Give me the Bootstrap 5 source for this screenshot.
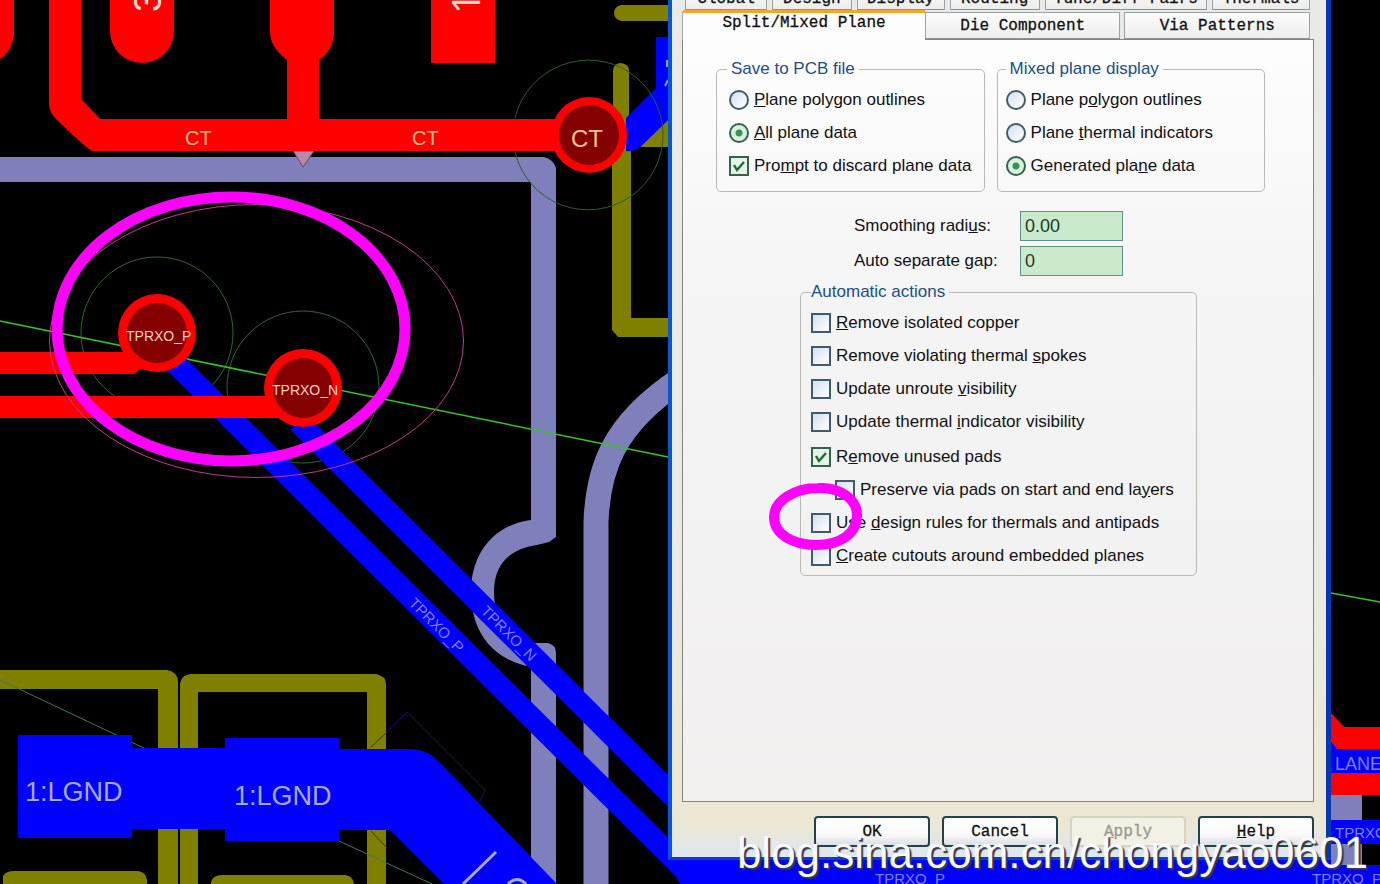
<!DOCTYPE html>
<html lang="en">
<head>
<meta charset="utf-8">
<meta name="viewport" content="width=device-width, initial-scale=1">
<title>Split/Mixed Plane options</title>
<link href="https://cdn.jsdelivr.net/npm/bootstrap@5.3.0/dist/css/bootstrap.min.css" rel="stylesheet">
<style>
body{background:#000;color:#111;font-family:"Liberation Sans",Arial,sans-serif;font-size:17px;line-height:20px}
.stage{min-height:100vh}
.board{position:absolute;inset:0;width:100%;height:100%}
.board text{font-family:"Liberation Sans",sans-serif}
.options{width:100%;max-width:663px;margin:-20px 49px 0 auto;padding:0 12px 10px 10px;
  border:solid #0a55d6;border-width:0 5px 3px 4px;border-right-color:#0238b4;border-bottom-color:#0a3fc4;
  background:linear-gradient(#e9e9e7 60%,#ece7d4 96%,#dfe6ee)}
.mono{font-family:"Liberation Mono","Courier New",monospace;font-size:16px;line-height:20px}
.tabs-back{padding:0 4px 0 3px;gap:5px;height:30px}
.tabs-front{height:29px}
.tab-key{border:1px solid #9aa3a8;border-bottom-color:#8a9499;border-radius:0;padding:0;color:#111;background:linear-gradient(#fcfcfc,#ededec);white-space:nowrap;-webkit-text-stroke:.3px}
.tabs-back .tab-key{padding-top:8px}
.tabs-front .tab-key{height:27px;margin-top:2px}
.tabs-front .tab-key.current{height:30px;margin:0 0 -1px;border:0;border-left:1px solid #aaa9a0;border-top:3px solid #f3a62e;border-radius:3px 0 0 0;background:#fdfdfd;z-index:1;padding-bottom:7px}
.sheet{min-height:763px;border:1px solid #86857a;background:linear-gradient(#fdfdfd,#f5f4f5 35%,#f1f0ef);padding:19px 48px 20px 33px}
.boxes{gap:12px}
.group-box{border:1px solid #b9bab4;border-radius:5px;padding:4px 11px 9px 12px;min-width:0}
.group-box legend{float:none;width:auto;margin:0 0 0 -2px;padding:0 4px;font-size:17px;line-height:20px;color:#1b4f86}
.choice{height:33px;gap:5px;white-space:nowrap}
.choice .form-check-input{width:20px;height:20px;margin:0;flex:none;border:2px solid #405a70;background-color:#f2f7fb;background-image:linear-gradient(135deg,#d3e0ee,#fff)}
.choice .form-check-input[type=checkbox]{border-radius:0}
.choice .form-check-input:checked{background-color:#e2f4e6;border-color:#35624f}
.choice .form-check-input[type=radio]:checked{background-image:radial-gradient(circle,#3d8f56 0 3px,#d8f2de 4px)}
.choice .form-check-input[type=checkbox]:checked{background-size:20px;background-image:url("data:image/svg+xml,%3Csvg xmlns='http://www.w3.org/2000/svg' viewBox='0 0 20 20'%3E%3Cpath d='M5 9l3 5 7-8' fill='none' stroke='%23206838' stroke-width='2.4'/%3E%3C/svg%3E")}
.measures{margin:19px 0 6px 138px;gap:5px 0;grid-template-columns:166px 103px}
.measures .form-control{height:30px;padding:0 4px;border:1px solid #5f9089;border-radius:0;background:#cae9cd;font-size:18px;color:#1b3a22}
.actions{margin-left:84px;max-width:397px;padding:4px 10px 3px}
.second-part{margin-top:2px}
.nested{padding-left:24px}
.ring{left:-43px;top:-23px;pointer-events:none}
.keys{gap:12px;margin-top:14px}
.key{width:116px;height:31px;padding:0;border:2px solid #24424c;border-radius:4px;background:linear-gradient(#fff,#fafafa 60%,#dadfe4);color:#111;-webkit-text-stroke:.3px}
.key:disabled{border:2px solid #d8d3c1;background:#f3f0e6;color:#9b998e;opacity:1}
.credit{right:12px;bottom:3px;font-size:44px;line-height:56px;color:#f7f9ff;text-shadow:2px 2px 1px #333a4d;white-space:nowrap}
</style>
</head>
<body>
<main class="stage position-relative overflow-hidden">
<svg class="board" viewBox="0 0 1380 884" preserveAspectRatio="xMinYMin slice" role="img" aria-label="Circuit board layout">
  <!-- plane outlines -->
  <g fill="none" stroke="#7f7fbb" stroke-width="25">
    <path d="M0 169.500H543.500V522"/>
    <path d="M543.500 884V665"/><path d="M596 884V522C598 470 612 425 680 380"/>
  </g>
  <g fill="#7f7fbb">
    <path d="M531 500H556V537L549 542L537 545C508 549 494 566 494 592C494 620 508 643 540 648V668C495 664 471 634 471 592C471 555 492 525 531 520Z"/>
    <path d="M531 643H548Q556 645 556 653V670H531Z"/>
  </g>
  <path d="M544 157H556V168Q553 159 544 157Z"/>
  <path d="M293 151L303 167L314 151Z" fill="#b788ad" stroke="#6d3b6c"/>
  <!-- silkscreen -->
  <g fill="#808000">
    <path d="M668 5H621Q614 7 614 13T621 21H668Z"/>
    <path d="M613 70Q614 63 621 63Q629 64 629 71V150H631V318H668V337H618L612 330V150H613Z"/>
    <path d="M640 147L668 120V147Z"/>
    <path d="M0 670H167Q178 672 178 682V884H158V689H0Z"/>
    <path d="M180 884V684Q182 674 191 674H376Q386 676 386 684V884H367V692H198V884Z"/>
    <path d="M3 884V876Q6 871 14 871H138Q146 872 147 880V884ZM211 884V882Q213 875 222 875H345Q353 876 354 884Z"/>
  </g>
  <g fill="none" stroke="#2a6b2c" stroke-width="1">
    <circle cx="157" cy="333" r="76"/><circle cx="303" cy="387" r="76"/>
    <path d="M0 680L146 749M339 841L432 884" stroke="#3a7a5a"/>
    <path d="M371 747L387 732M371 831L387 848" stroke="#2e2e10"/>
    <path d="M387 732L407 712L485 790L480 801" stroke="#10106c"/>
  </g>
  <path d="M0 321L668 457M1331 593L1380 602" stroke="#35c61f" stroke-width="1.500"/>
  <!-- bottom copper -->
  <g fill="#00f">
    <path d="M18 735H132V748H225V738H339V749H412Q427 750 438 761L557 884H444L390 830H339V841H225V829H132V838H18Z"/>
    <path d="M626 118L656 88V37H668V120L640 147Q634 152 626 151Z"/>
    <path d="M655 840L700 858H1331V742H1380V884H680Z"/>
  </g>
  <path d="M172 360L365 552L720 905M298 422L700 823" stroke="#00f" stroke-width="22" fill="none"/>
  <path d="M1331 795H1362V820H1331ZM1331 844H1362V865H1331Z" fill="#7f7fbb"/>
  <path d="M1362 795H1380V820H1362ZM1362 844H1380V865H1362Z"/>
  <!-- top copper -->
  <g fill="red">
    <path d="M0 0H14V36Q11 52 0 59Z"/>
    <path d="M49 0H81V99L100 119H287V60Q270 47 270 32V0H334V32Q334 49 319 60V119H570V151H92Q87 149 55 118Q49 111 49 103Z"/>
    <path d="M110 0H174V31A32 32 0 0 1 110 31ZM431 0H495V63H431Z"/>
    <circle cx="589" cy="135" r="38"/><circle cx="157" cy="333" r="39"/><circle cx="303" cy="388" r="39"/>
    <path d="M0 352H145V365L134 374H0ZM0 396H290V418H0Z"/>
    <path d="M1331 713L1344 727H1380V749H1337L1331 742ZM1331 773H1380V795H1331Z"/>
  </g>
  <g fill="#850000"><circle cx="589" cy="135" r="30"/><circle cx="157" cy="333" r="30"/><circle cx="303" cy="388" r="30"/></g>
  <path d="M562 65A75 75 0 0 0 515 118M515 152A75 75 0 1 0 629 72A75 75 0 0 0 562 65" fill="none" stroke="#245f38"/>
  <!-- net names -->
  <g fill="#ffc08a">
    <text x="185" y="145" font-size="20">CT</text><text x="412" y="145" font-size="20">CT</text>
    <text x="571" y="147" font-size="24">CT</text>
  </g>
  <g fill="#ffd0bd" font-size="14"><text x="126" y="341">TPRXO_P</text><text x="272" y="395">TPRXO_N</text></g>
  <g fill="#a9a9c8" font-size="27"><text x="25" y="801">1:LGND</text><text x="234" y="805">1:LGND</text></g>
  <g fill="#8181e6" font-size="15">
    <text transform="translate(408 604) rotate(45)">TPRXO_P</text>
    <text transform="translate(480 612) rotate(45)">TPRXO_N</text>
    <text x="875" y="884">TPRXO_P</text><text x="1312" y="884">TPRXO_P</text>
    <text x="1335" y="838">TPRXO</text><text x="1335" y="770" font-size="18">LANE</text>
  </g>
  <g fill="#ffe0d8" font-size="38"><text transform="translate(161 12) rotate(-90)">3</text><text transform="translate(480 14) rotate(-90)" style="font-family:'Open Sans',sans-serif">1</text></g>
  <path d="M463 884L496 852M508 884Q517 875 526 884" fill="none" stroke="#aaaac8" stroke-width="3"/>
  <path d="M667 60V67M665 86L668 80" stroke="#9a9af0" stroke-width="2"/>
  <!-- highlighted pair -->
  <ellipse cx="256.500" cy="341" rx="207" ry="136.500" fill="none" stroke="#c23a8c"/>
  <ellipse cx="231" cy="329" rx="174" ry="132" fill="none" stroke="#f0f" stroke-width="11"/>
</svg>

<form class="options position-relative">
  <nav class="tabs-back d-flex mono">
    <button type="button" class="tab-key" style="flex:82 1 0">Global</button>
    <button type="button" class="tab-key" style="flex:79 1 0">Design</button>
    <button type="button" class="tab-key" style="flex:88 1 0">Display</button>
    <button type="button" class="tab-key" style="flex:90 1 0">Routing</button>
    <button type="button" class="tab-key" style="flex:164 1 0">Tune/Diff Pairs</button>
    <button type="button" class="tab-key" style="flex:98 1 0">Thermals</button>
  </nav>
  <nav class="tabs-front d-flex mono pe-1">
    <button type="button" class="tab-key current position-relative" style="flex:244 1 0">Split/Mixed Plane</button>
    <button type="button" class="tab-key me-1" style="flex:195 1 0">Die Component</button>
    <button type="button" class="tab-key" style="flex:185 1 0">Via Patterns</button>
  </nav>
  <section class="sheet">
    <div class="boxes d-flex">
      <fieldset class="group-box flex-fill w-50">
        <legend>Save to PCB file</legend>
        <div class="choice d-flex align-items-center"><input class="form-check-input" type="radio" name="save" id="s1"><label for="s1"><u>P</u>lane polygon outlines</label></div>
        <div class="choice d-flex align-items-center"><input class="form-check-input" type="radio" name="save" id="s2" checked><label for="s2"><u>A</u>ll plane data</label></div>
        <div class="choice d-flex align-items-center"><input class="form-check-input" type="checkbox" id="s3" checked><label for="s3">Pro<u>m</u>pt to discard plane data</label></div>
      </fieldset>
      <fieldset class="group-box flex-fill w-50 ps-2">
        <legend class="ms-0">Mixed plane display</legend>
        <div class="choice d-flex align-items-center"><input class="form-check-input" type="radio" name="mix" id="m1"><label for="m1">Plane p<u>o</u>lygon outlines</label></div>
        <div class="choice d-flex align-items-center"><input class="form-check-input" type="radio" name="mix" id="m2"><label for="m2">Plane <u>t</u>hermal indicators</label></div>
        <div class="choice d-flex align-items-center"><input class="form-check-input" type="radio" name="mix" id="m3" checked><label for="m3">Generated pla<u>n</u>e data</label></div>
      </fieldset>
    </div>
    <div class="measures d-grid align-items-center">
      <label for="radius">Smoothing radi<u>u</u>s:</label><input class="form-control" id="radius" value="0.00">
      <label for="gap">Auto separate <u>g</u>ap:</label><input class="form-control" id="gap" value="0">
    </div>
    <fieldset class="group-box actions">
      <legend class="ms-0 ps-0">Automatic actions</legend>
      <div class="choice d-flex align-items-center"><input class="form-check-input" type="checkbox" id="a1"><label for="a1"><u>R</u>emove isolated copper</label></div>
      <div class="choice d-flex align-items-center"><input class="form-check-input" type="checkbox" id="a2"><label for="a2">Remove violating thermal <u>s</u>pokes</label></div>
      <div class="choice d-flex align-items-center"><input class="form-check-input" type="checkbox" id="a3"><label for="a3">Update unroute <u>v</u>isibility</label></div>
      <div class="choice d-flex align-items-center"><input class="form-check-input" type="checkbox" id="a4"><label for="a4">Update thermal <u>i</u>ndicator visibility</label></div>
      <div class="second-part">
        <div class="choice d-flex align-items-center"><input class="form-check-input" type="checkbox" id="a5" checked><label for="a5">R<u>e</u>move unused pads</label></div>
        <div class="choice nested d-flex align-items-center"><input class="form-check-input" type="checkbox" id="a6"><label for="a6">Preserve via pads on start and end la<u>y</u>ers</label></div>
        <div class="choice d-flex align-items-center position-relative"><input class="form-check-input" type="checkbox" id="a7"><label for="a7">Use <u>d</u>esign rules for thermals and antipads</label>
          <svg class="ring position-absolute" width="96" height="68" viewBox="0 0 96 68" aria-hidden="true"><path d="M50 5C73 4 89 17 89 32C89 51 72 62 48 62C26 62 6 52 6 34C6 18 26 5 50 5Z" fill="none" stroke="#f0f" stroke-width="10"/></svg></div>
        <div class="choice d-flex align-items-center"><input class="form-check-input" type="checkbox" id="a8"><label for="a8"><u>C</u>reate cutouts around embedded planes</label></div>
      </div>
    </fieldset>
  </section>
  <div class="keys d-flex justify-content-end">
    <button type="button" class="key mono">OK</button>
    <button type="button" class="key mono">Cancel</button>
    <button type="button" class="key mono" disabled><u>A</u>pply</button>
    <button type="button" class="key mono"><u>H</u>elp</button>
  </div>
</form>
<p class="credit position-absolute m-0">blog.sina.com.cn/chongyao0601</p>
</main>
<script src="https://cdn.jsdelivr.net/npm/bootstrap@5.3.0/dist/js/bootstrap.bundle.min.js"></script>
</body>
</html>
